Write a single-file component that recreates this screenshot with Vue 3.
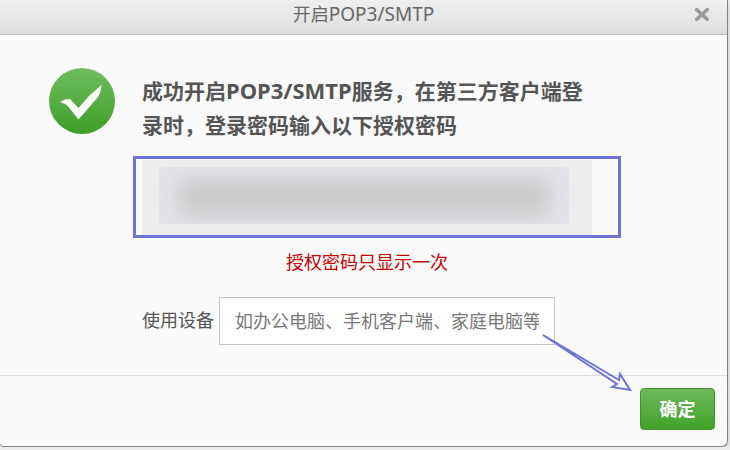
<template>
  <form class="dialog" @submit.prevent>
    <header class="dialog-header">
      <h1 class="title">开启<span class="protocol">POP3/SMTP</span></h1>
      <button class="close" type="button" aria-label="关闭">
        <svg width="14" height="13" viewBox="0 0 14 13">
          <path d="M0.500 0.500 L13.500 12.500 M13.500 0.500 L0.500 12.500" />
        </svg>
      </button>
    </header>

    <main class="dialog-body">
      <svg class="success-icon" width="66" height="66" viewBox="0 0 66 66">
        <defs>
          <linearGradient id="success-fill" x1="0" y1="0" x2="0" y2="1">
            <stop offset="0" stop-color="#70bd5e" />
            <stop offset="1" stop-color="#3c9f26" />
          </linearGradient>
        </defs>
        <circle cx="33" cy="33" r="33" fill="url(#success-fill)" />
        <path
          d="M11 34 L16 31.500 L21 31 L29.500 40 L40 28 L52.500 17 L51.500 24 L49 29 L29.500 51.500 L20 39.500 L17 36.500 Z"
          fill="#fff"
        />
      </svg>

      <div class="content">
        <p class="message">成功开启<span class="protocol">POP3/SMTP</span>服务，在第三方客户端登<br />录时，登录密码输入以下授权密码</p>
        <div class="password-box">
          <div class="password-mask"></div>
          <div class="highlight"></div>
        </div>
        <p class="warning">授权密码只显示一次</p>
        <div class="device-row">
          <label for="device">使用设备</label>
          <input
            id="device"
            v-model="device"
            type="text"
            placeholder="如办公电脑、手机客户端、家庭电脑等"
          />
        </div>
      </div>
    </main>

    <footer class="dialog-footer">
      <button class="confirm" type="submit">确定</button>
      <svg class="arrow" width="92" height="62" viewBox="0 0 92 62">
        <path d="M2 2 L78 47 L79 41 L89 57 L71 54 L76 51 Z" />
      </svg>
    </footer>
  </form>
</template>

<script setup>
import { ref } from 'vue'

const device = ref('')
</script>

<style>
body {
  background: #ededed;
}
</style>

<style scoped>
.dialog {
  position: relative;
  margin-right: 2px;
  border-right: 1px solid #828282;
  border-bottom: 1px solid #828282;
  border-radius: 0 0 6px 4px;
  background: #fafafa;
  box-shadow: 0 3px 4px rgba(0, 0, 0, 0.16);
  color: #555;
  font-family: "Noto Sans", "Noto Sans CJK SC", sans-serif;
  font-size: 18px;
}

.dialog-header {
  position: relative;
  height: 34px;
  border-bottom: 1px solid #bdbdbd;
  background: linear-gradient(#efefef, #dfdfdf);
}

.title {
  margin: 0;
  color: #666;
  font-size: 18px;
  font-weight: 400;
  line-height: 28px;
  text-align: center;
}

.protocol {
  line-height: 1;
}

.title .protocol {
  font-size: 19px;
}

.close {
  position: absolute;
  top: 8px;
  right: 18px;
  display: flex;
  padding: 0;
  border: 0;
  background: none;
  cursor: pointer;
}

.close path {
  fill: none;
  stroke: #999;
  stroke-width: 3.5;
}

.dialog-body {
  display: flex;
  gap: 27px;
  padding: 33px 49px 30px;
}

.success-icon {
  flex: none;
}

.content {
  flex: 1;
  max-width: 450px;
  padding-top: 6px;
}

.message {
  margin: 0 0 18px;
  font-size: 21px;
  font-weight: 700;
  line-height: 34px;
}

.message .protocol {
  font-size: 22px;
}

.password-box {
  position: relative;
  padding: 7px 23px 11px 17px;
  background: #ececec;
}

.password-mask {
  height: 57px;
  overflow: hidden;
  background: #e3e3e9;
}

.password-mask::before {
  content: "";
  display: block;
  height: 35px;
  margin: 13px 20px;
  background: #c8c8c8;
  filter: blur(11px);
}

/* 标注框 */
.highlight {
  position: absolute;
  inset: -4px -29px -3px -9px;
  border: 3px solid #6c74d8;
}

.warning {
  margin: 12px 0 20px;
  color: #c00;
  line-height: 30px;
  text-align: center;
}

.device-row {
  display: flex;
  align-items: center;
  gap: 5px;
}

.device-row label {
  flex: none;
  padding-bottom: 4px;
}

.device-row input {
  box-sizing: border-box;
  width: 336px;
  min-width: 0;
  height: 48px;
  padding: 0 15px;
  border: 1px solid #c4c4c4;
  border-radius: 0;
  background: #fff;
  color: #555;
  font: inherit;
}

.device-row input::placeholder {
  color: #777;
}

.dialog-footer {
  position: relative;
  display: flex;
  justify-content: flex-end;
  padding: 12px 12px 16px;
  border-top: 1px solid #dedede;
}

.confirm {
  width: 75px;
  height: 42px;
  padding: 0 0 2px;
  border: 1px solid #3e962b;
  border-radius: 4px;
  background: linear-gradient(#6dba5a, #40a228);
  color: #fff;
  font: inherit;
  font-weight: 700;
  cursor: pointer;
}

.arrow {
  position: absolute;
  top: -43px;
  right: 94px;
  pointer-events: none;
}

.arrow path {
  fill: none;
  stroke: #6c74d8;
  stroke-width: 2;
}
</style>
